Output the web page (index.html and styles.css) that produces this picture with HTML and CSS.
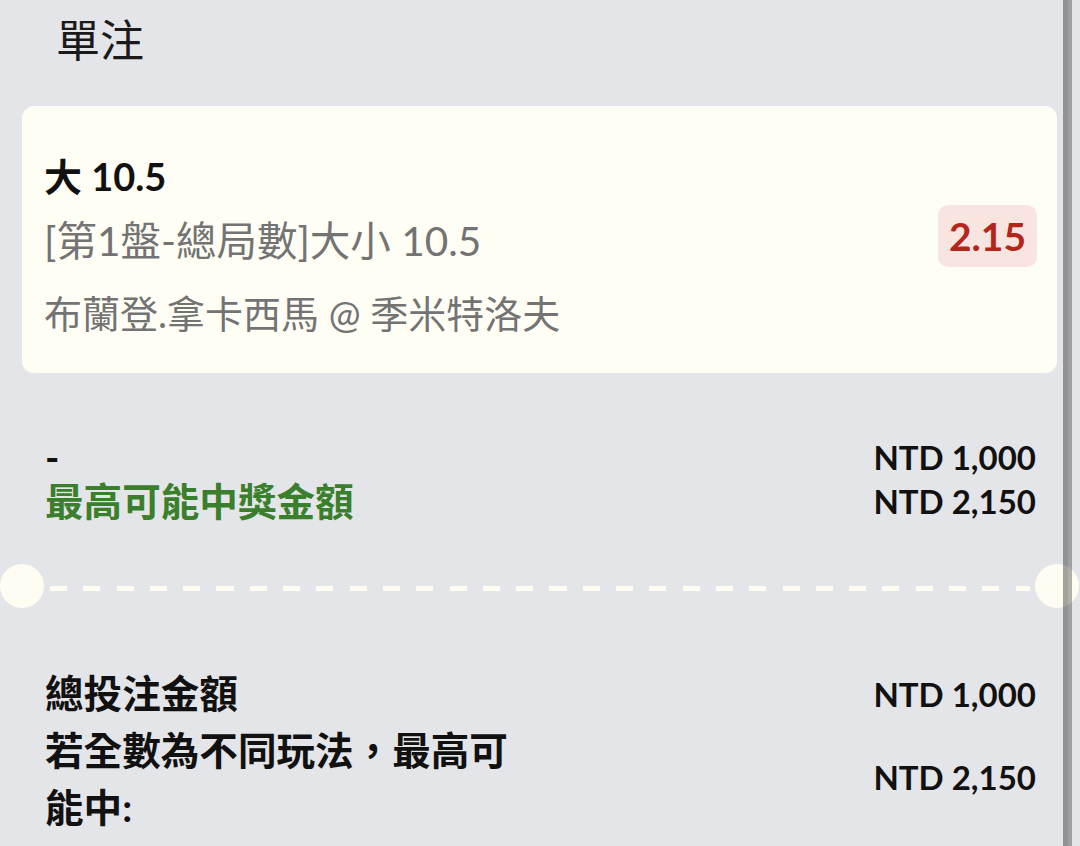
FILE: index.html
```html
<!DOCTYPE html>
<html lang="zh-Hant">
<head>
<meta charset="utf-8">
<title>單注</title>
<link rel="stylesheet" href="styles.css">
</head>
<body>
<div class="page">
  <h1 class="title">單注</h1>

  <div class="card">
    <div class="card-text">
      <div class="pick">大 10.5</div>
      <div class="market">[第1盤-總局數]大小 10.5</div>
      <div class="event">布蘭登.拿卡西馬 @ 季米特洛夫</div>
    </div>
    <div class="odds">2.15</div>
  </div>

  <div class="summary">
    <div class="row row-tight">
      <div class="label">-</div>
      <div class="value">NTD 1,000</div>
    </div>
    <div class="row row-tight">
      <div class="label label-green">最高可能中獎金額</div>
      <div class="value">NTD 2,150</div>
    </div>
  </div>

  <div class="divider"><div class="dashes"></div></div>

  <div class="totals">
    <div class="row">
      <div class="label label-wide">總投注金額</div>
      <div class="value">NTD 1,000</div>
    </div>
    <div class="row">
      <div class="label label-wide">若全數為不同玩法，最高可能中:</div>
      <div class="value value-lift">NTD 2,150</div>
    </div>
  </div>
</div>
<div class="scrollbar"></div>
</body>
</html>
```

FILE: styles.css
```css
html, body {
  margin: 0;
  padding: 0;
}

body {
  width: 1080px;
  height: 846px;
  overflow: hidden;
  background: #e4e5e8;
  font-family: Lato, "Noto Sans CJK TC", sans-serif;
  color: #111111;
  position: relative;
}

.page {
  padding: 18px 23px 0 22px;
}

.title {
  margin: 0 0 44px 34px;
  font-size: 44px;
  line-height: 44px;
  font-weight: 400;
  color: #1a1a1a;
}

.card {
  display: flex;
  align-items: center;
  background: #fffef5;
  border-radius: 12px;
  padding: 48px 20px 24px 22px;
}

.card-text {
  flex: 1;
}

.pick {
  font-size: 38px;
  line-height: 44px;
  font-weight: 700;
  color: #111111;
}

.market,
.event {
  font-size: 38px;
  line-height: 72px;
  color: #737373;
}

.market {
  font-size: 40.5px;
  margin-top: 7px;
}

.odds {
  height: 62px;
  padding: 0 11px;
  margin-bottom: 31px;
  display: flex;
  align-items: center;
  background: #f8e5df;
  border-radius: 10px;
  font-size: 39px;
  font-weight: 700;
  color: #b3261e;
}

.summary {
  margin-top: 62px;
  padding: 0 21px 0 23px;
}

.row {
  display: flex;
  justify-content: space-between;
  align-items: center;
}

.row-tight .label,
.row-tight .value {
  line-height: 44px;
}

.label {
  font-size: 38.6px;
  line-height: 57px;
  font-weight: 700;
  color: #111111;
}

.label-green {
  color: #3a7f2c;
}

.label-wide {
  max-width: 490px;
}

.value {
  font-size: 33px;
  font-weight: 700;
  color: #111111;
  white-space: nowrap;
}

.value-lift {
  margin-bottom: 5px;
}

.divider {
  position: relative;
  height: 44px;
  margin: 41px 0 57px;
}

.divider::before,
.divider::after {
  content: "";
  position: absolute;
  top: 0;
  width: 44px;
  height: 44px;
  border-radius: 50%;
  background: #fffdf2;
}

.divider::before {
  left: -22px;
}

.divider::after {
  right: -22px;
}

.dashes {
  position: absolute;
  left: 28px;
  right: 27px;
  top: 22px;
  height: 5px;
  background: repeating-linear-gradient(to right, #fffdf2 0 17px, transparent 17px 33.3px);
}

.totals {
  padding: 0 21px 0 23px;
}

.scrollbar {
  position: absolute;
  top: 0;
  bottom: 0;
  right: 8px;
  width: 9px;
  background: linear-gradient(to right, rgba(0, 0, 0, 0.36) 0 5px, rgba(0, 0, 0, 0.3) 5px 9px);
}
```
